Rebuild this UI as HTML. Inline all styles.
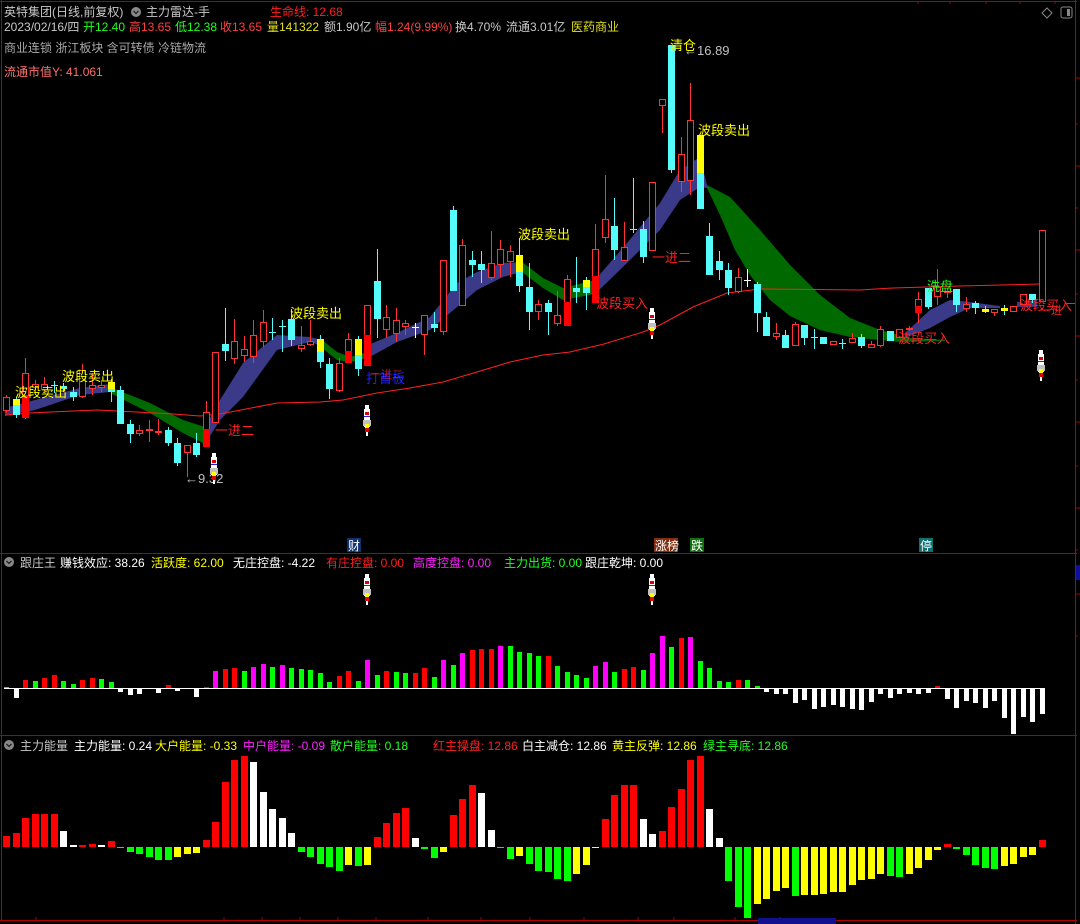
<!DOCTYPE html>
<html><head><meta charset="utf-8">
<style>
html,body{margin:0;padding:0;background:#000;}
body{width:1080px;height:924px;overflow:hidden;}
svg{display:block;}
text{font-family:"Liberation Sans","WenQuanYi Zen Hei","Noto Sans CJK SC",sans-serif;font-size:12px;}
</style></head><body>
<svg id="s" width="1080" height="924" viewBox="0 0 1080 924" xmlns="http://www.w3.org/2000/svg">
<rect width="1080" height="924" fill="#000"/>
<g id="bands"></g>
<g id="ma"></g>
<g id="cand"></g>
<g id="bars"></g>
<!-- frame -->
<g stroke="#b00000" stroke-width="1" fill="none">
<line x1="0" y1="1.5" x2="1077" y2="1.5"/>
<line x1="1.5" y1="0" x2="1.5" y2="921"/>
<line x1="1075.5" y1="0" x2="1075.5" y2="924"/>
<line x1="0" y1="553.5" x2="1077" y2="553.5"/>
<line x1="0" y1="735.5" x2="1077" y2="735.5"/>
<line x1="0" y1="920.5" x2="1077" y2="920.5"/>
<line x1="1065" y1="303.5" x2="1075" y2="303.5" stroke="#ff2020"/>
</g>
<g id="ticks" stroke="#b00000"></g>
<rect x="1076" y="565" width="4" height="15" fill="#1010a0"/>
<rect x="758" y="918" width="78" height="6" fill="#101090"/>
<!-- top right icons -->
<path d="M1047 8 L1052 13 L1047 18 L1042 13 Z" fill="none" stroke="#888" stroke-width="1"/>
<rect x="1061" y="7" width="11" height="11" rx="2" fill="none" stroke="#888"/>
<rect x="1067" y="9" width="3" height="7" fill="#888"/>

<!-- header -->
<g>
<text x="4" y="16" fill="#c8c8c8">英特集团(日线,前复权)</text>
<circle cx="136" cy="12" r="5" fill="#888"/><path d="M133.5 11 L136 13.5 L138.5 11" stroke="#222" fill="none" stroke-width="1.3"/>
<text x="146" y="16" fill="#c8c8c8">主力雷达-手</text>
<text x="270" y="16" fill="#ff2020">生命线: 12.68</text>
<text x="4" y="31" fill="#c8c8c8">2023/02/16/四</text>
<text x="83" y="31" fill="#20ff20">开12.40</text>
<text x="129" y="31" fill="#ff4040">高13.65</text>
<text x="175" y="31" fill="#20ff20">低12.38</text>
<text x="220" y="31" fill="#ff4040">收13.65</text>
<text x="267" y="31" fill="#e0e020">量141322</text>
<text x="324" y="31" fill="#c8c8c8">额1.90亿</text>
<text x="375" y="31" fill="#ff4040">幅1.24(9.99%)</text>
<text x="455" y="31" fill="#c8c8c8">换4.70%</text>
<text x="506" y="31" fill="#c8c8c8">流通3.01亿</text>
<text x="571" y="31" fill="#e0e020">医药商业</text>
<text x="4" y="52" fill="#a8a8a8">商业连锁 浙江板块 含可转债 冷链物流</text>
<text x="4" y="76" fill="#ff7070">流通市值Y: 41.061</text>
</g>

<!-- main labels -->
<g font-size="13">
<text x="15" y="397" fill="#ffff00" style="font-size:13px">波段卖出</text>
<text x="62" y="381" fill="#ffff00" style="font-size:13px">波段卖出</text>
<text x="290" y="318" fill="#ffff00" style="font-size:13px">波段卖出</text>
<text x="518" y="239" fill="#ffff00" style="font-size:13px">波段卖出</text>
<text x="698" y="135" fill="#ffff00" style="font-size:13px">波段卖出</text>
<text x="670" y="50" fill="#ffff00" style="font-size:13px">清仓</text>
<text x="684" y="55" fill="#c0c0c0" style="font-size:13px">←16.89</text>
<text x="185" y="483" fill="#c0c0c0" style="font-size:13px">←9.32</text>
<text x="215" y="435" fill="#ff2020" style="font-size:13px">一进二</text>
<text x="652" y="262" fill="#ff2020" style="font-size:13px">一进二</text>
<text x="366" y="383" fill="#2020ff" style="font-size:13px">打首板</text>
<text x="370" y="378" fill="#ff2020" style="font-size:11px;opacity:.7">一进二</text>
<text x="596" y="308" fill="#ff2020" style="font-size:13px">波段买入</text>
<text x="898" y="343" fill="#ff2020" style="font-size:13px">波段买入</text>
<text x="1020" y="310" fill="#ff2020" style="font-size:13px">波段买入</text>
<text x="1040" y="314" fill="#ff2020" style="font-size:11px">一进</text>
<text x="927" y="291" fill="#20ff20" style="font-size:13px">洗盘</text>
<rect x="347" y="538" width="14" height="14" fill="#103070"/><text x="348" y="550" fill="#fff">财</text>
<rect x="654" y="538" width="24" height="14" fill="#803010"/><text x="655" y="550" fill="#fff">涨榜</text>
<rect x="690" y="538" width="14" height="14" fill="#107010"/><text x="691" y="550" fill="#fff">跌</text>
<rect x="919" y="538" width="14" height="14" fill="#107070"/><text x="920" y="550" fill="#fff">停</text>
</g>

<!-- middle header -->
<g>
<circle cx="9" cy="562" r="5" fill="#888"/><path d="M6.5 561 L9 563.5 L11.5 561" stroke="#222" fill="none" stroke-width="1.3"/>
<text x="20" y="567" fill="#c8c8c8">跟庄王</text>
<text x="60" y="567" fill="#fff">赚钱效应: 38.26</text>
<text x="151" y="567" fill="#ffff00">活跃度: 62.00</text>
<text x="233" y="567" fill="#fff">无庄控盘: -4.22</text>
<text x="326" y="567" fill="#ff2020">有庄控盘: 0.00</text>
<text x="413" y="567" fill="#ff20ff">高度控盘: 0.00</text>
<text x="504" y="567" fill="#20ff20">主力出货: 0.00</text>
<text x="585" y="567" fill="#fff">跟庄乾坤: 0.00</text>
</g>
<g>
<circle cx="9" cy="745" r="5" fill="#888"/><path d="M6.5 744 L9 746.5 L11.5 744" stroke="#222" fill="none" stroke-width="1.3"/>
<text x="20" y="750" fill="#c8c8c8">主力能量</text>
<text x="74" y="750" fill="#fff">主力能量: 0.24</text>
<text x="155" y="750" fill="#ffff00">大户能量: -0.33</text>
<text x="243" y="750" fill="#ff20ff">中户能量: -0.09</text>
<text x="330" y="750" fill="#20ff20">散户能量: 0.18</text>
<text x="433" y="750" fill="#ff2020">红主操盘: 12.86</text>
<text x="522" y="750" fill="#fff">白主减仓: 12.86</text>
<text x="612" y="750" fill="#ffff00">黄主反弹: 12.86</text>
<text x="703" y="750" fill="#20ff20">绿主寻底: 12.86</text>
</g>
<g id="rockets"></g>
</svg>
<script>
var NS="http://www.w3.org/2000/svg";
function el(p,t,a){var e=document.createElementNS(NS,t);for(var k in a)e.setAttribute(k,a[k]);document.getElementById(p).appendChild(e);return e;}
function X(i){return 6+9.5*i;}
// bands
function band(up,lo,col){var pts=up.map(function(p){return p.join(',')}).concat(lo.slice().reverse().map(function(p){return p.join(',')}));el('bands','polygon',{points:pts.join(' '),fill:col});}
var B='#3a3a88',G='#006a00';
band([[5,408],[35,400],[80,388],[110,384]],[[5,416],[35,410],[80,395],[110,392]],B);
band([[112,388],[150,403],[183,420],[205,427]],[[112,394],[150,413],[183,433],[205,444]],G);
band([[205,427],[220,400],[243,363],[277,335],[310,337],[322,340]],[[205,444],[220,420],[243,397],[277,350],[310,342],[322,346]],B);
band([[322,340],[337,352],[350,357],[368,352]],[[322,348],[337,360],[350,362],[368,358]],G);
band([[368,345],[397,333],[430,317],[457,283],[477,272],[503,263],[522,262]],[[368,358],[397,342],[430,330],[457,307],[477,290],[503,277],[522,272]],B);
band([[522,262],[543,278],[563,288],[595,280]],[[522,272],[543,288],[563,300],[595,294]],G);
band([[595,280],[627,243],[660,203],[680,170],[700,157],[707,185]],[[595,294],[627,263],[660,230],[680,200],[700,187],[707,188]],B);
band([[707,185],[730,197],[760,230],[790,265],[820,295],[850,318],[880,330],[910,338],[945,340]],[[707,188],[720,215],[735,250],[750,275],[770,300],[790,316],[820,330],[850,337],[900,342],[945,341]],G);
band([[905,333],[930,310],[950,300],[970,302],[992,305],[1000,306]],[[905,338],[930,328],[950,317],[970,308],[992,308],[1000,308]],B);
band([[1017,302],[1037,300]],[[1017,307],[1037,307]],B);
// MA
var ma=[[5,415],[30,413],[50,412],[97,410],[117,411],[173,414],[200,416],[220,414],[277,403],[320,402],[343,400],[377,393],[410,388],[443,382],[477,372],[510,362],[543,355],[570,352],[604,344],[643,332],[660,325],[693,307],[727,293],[760,289],[860,290],[893,288],[960,286],[1040,284]];
el('ma','polyline',{points:ma.map(function(p){return p.join(',')}).join(' '),fill:'none',stroke:'#ff2020','stroke-width':1});
// candles
var C=[['r',397,411,395,413],['y',399,415,397,418,405],['R',373,418,358,419,395],['r',384,388,380,392],['r',384,390,377,392],['c',385,386,381,393],['c',386,389,383,392],['c',392,397,387,401],['r',370,397,364,398],['r',385,389,373,395],['r',385,388,380,392],['y',382,392,379,402,389],['c',390,424,386,424],['c',424,434,420,443],['r',430,434,425,436],['r',429,431,420,442],['r',431,433,419,435],['c',430,443,427,446],['c',443,463,438,466],['r',445,453,445,477],['c',443,455,433,457],['R',412,447,401,447,429],['r',352,423,352,423],['c',344,351,308,361],['r',341,359,319,364],['r',349,356,336,362],['r',335,357,320,363],['r',322,342,310,347],['c',332,333,318,340],['c',326,327,320,352],['c',319,340,309,346],['r',345,349,326,352],['r',341,345,320,346],['y',339,362,335,368,352],['c',364,389,358,399],['r',363,391,358,392],['R',339,363,333,363,351],['y',339,369,336,376,355],['R',305,366,305,366,335],['c',281,319,249,338],['r',317,330,305,338],['r',320,334,308,342],['r',323,327,320,335],['w',327,328,323,338],['r',315,335,315,355],['c',324,328,312,332],['r',260,332,260,335],['c',210,291,206,291],['r',245,306,239,306],['c',260,265,251,277],['c',264,270,251,283],['r',263,278,231,280],['r',249,265,240,277],['r',251,262,245,277],['y',255,286,238,292,272],['c',287,312,263,330],['r',304,312,300,320],['c',303,312,300,335],['r',315,324,291,326],['R',279,326,275,326,302],['c',288,292,257,303],['y',280,293,277,310,287],['R',249,303,224,303,276],['r',219,238,175,243],['c',226,250,198,260],['r',247,261,222,261],['c',229,230,178,233],['c',229,257,221,263],['r',182,251,182,251],['r',99,106,99,133],['c',45,170,45,173],['r',154,182,137,192],['r',120,181,83,195],['y',135,209,135,209,173],['c',236,275,223,275],['c',261,270,251,280],['c',270,288,263,295],['r',277,292,268,293],['w',280,281,269,287],['c',284,313,282,332],['c',317,336,312,336],['r',333,337,323,340],['c',335,348,330,348],['r',324,346,322,346],['c',325,338,325,345],['c',337,338,329,349],['c',337,344,337,344],['r',341,345,341,345],['c',343,344,339,349],['r',338,343,333,343],['c',337,346,334,348],['r',344,348,341,348],['r',329,346,326,347],['c',331,341,331,341],['r',329,338,329,338],['r',328,329,326,331],['R',299,313,292,323,306],['c',288,307,288,309],['r',287,297,269,305],['r',291,293,291,298],['c',289,305,289,312],['r',304,309,297,312],['c',303,308,301,314],['Y',309,312,306,313],['r',309,313,309,316],['Y',308,311,305,315],['r',306,312,306,312],['r',294,305,294,305],['c',294,300,294,303],['r',230,302,230,302]];
var CY='#54fcfc',RD='#ff3232',YL='#ffff00';
C.forEach(function(c,i){var x=Math.round(X(i)),t=c[0],a=c[1],b=c[2],wt=c[3],wb=c[4];var h=Math.max(b-a,1);
 var col=(t=='c'||t=='y'||t=='Y')?CY:(t=='w'?'#fff':RD);
 el('cand','rect',{x:x,y:wt,width:1,height:Math.max(wb-wt,1),fill:col});
 if(t=='r'){el('cand','rect',{x:x-2.5,y:a+0.5,width:6,height:Math.max(h-1,1),fill:'#000',stroke:RD,'stroke-width':1});}
 else if(t=='R'){el('cand','rect',{x:x-2.5,y:a+0.5,width:6,height:h-1,fill:'#000',stroke:RD,'stroke-width':1});el('cand','rect',{x:x-3,y:c[5],width:7,height:b-c[5],fill:'#ff0000'});}
 else if(t=='c'){el('cand','rect',{x:x-3,y:a,width:7,height:h,fill:CY});}
 else if(t=='y'){el('cand','rect',{x:x-3,y:a,width:7,height:h,fill:CY});el('cand','rect',{x:x-3,y:a,width:7,height:c[5]-a,fill:YL});}
 else if(t=='Y'){el('cand','rect',{x:x-3,y:a,width:7,height:h,fill:YL});}
 else if(t=='w'){el('cand','rect',{x:x-3,y:a,width:7,height:1,fill:'#fff'});}
});
// middle bars
var M='g1 w-9 r8 g7 r10 r13 g7 g4 r8 r10 g9 g6 w-3 w-6 w-5 g0 w-4 r3 w-2 g0 w-8 r1 m17 r19 r20 g17 m21 m24 g21 m23 g20 g19 g18 g15 g6 r12 r17 g7 m28 g13 r17 g16 g15 r15 r20 g11 m28 g23 m35 r38 r39 r39 m42 g42 g36 g35 g32 r32 g22 g16 g13 g10 m22 m26 g16 r19 r21 g18 m35 m52 g41 r50 m51 g27 g20 g7 g6 r8 g8 g2 w-3 w-5 w-5 w-14 w-11 w-20 w-18 w-16 w-18 w-20 w-21 w-13 w-5 w-9 w-5 w-4 w-5 w-4 r2 w-10 w-19 w-12 w-14 w-19 w-12 w-29 w-45 w-28 w-33 w-25'.split(' ');
var CM={g:'#00ff00',r:'#ff0000',m:'#ff00ff',w:'#ffffff',y:'#ffff00'};
el('bars','rect',{x:4,y:688,width:1041,height:1,fill:'#fff'});
M.forEach(function(s,i){var c=s[0],v=parseFloat(s.slice(1));if(v==0)return;var x=Math.round(X(i))-2;
 if(v>0)el('bars','rect',{x:x,y:688-v,width:5,height:v,fill:CM[c]});else el('bars','rect',{x:x,y:689,width:5,height:-v,fill:CM[c]});});
var L='r11 r14 r29 r33 r33 r33 w16 w2 r2 r3 w2 r6 g-1 g-5 g-7 g-10 g-13 g-13 y-10 y-7 y-6 r7 r25 r65 r87 r91 w85 w55 w38 w29 w14 g-5 g-10 g-17 g-20 g-24 y-18 g-19 y-18 r10 r24 r34 r39 w9 g-2 g-11 y-5 r32 r48 r62 w54 w17 g-1 g-12 y-9 g-17 g-24 g-25 g-32 g-34 y-27 y-18 y-1 r28 r52 r62 r62 w28 w13 r16 r40 r58 r87 r91 w38 w9 g-34 g-60 g-71 y-57 y-52 y-44 y-41 g-49 y-48 y-48 y-47 y-45 y-45 y-38 y-33 y-32 y-27 g-29 g-30 y-27 y-21 y-13 y-3 r3 g-2 g-8 g-18 g-21 g-22 y-19 y-17 y-10 y-8 r7'.split(' ');
L.forEach(function(s,i){var c=s[0],v=parseFloat(s.slice(1));if(v==0)return;var x=Math.round(X(i))-3;
 if(v>0)el('bars','rect',{x:x,y:847-v,width:7,height:v,fill:CM[c]});else el('bars','rect',{x:x,y:847,width:7,height:-v,fill:CM[c]});});
// ticks
[35,58,79,100,121,143,164,186,207,229,250,271,293,314].forEach(function(y,i){el('ticks','line',{x1:1075,y1:y*2+8,x2:i%2?1078:1080,y2:y*2+8});});
[38,70,106,140,175,217,253,290,333,364,406,440,481,517].forEach(function(x){el('ticks','line',{x1:x+880,y1:1,x2:x+880,y2:4});});
[36,224,262,300,338,376,428,481,530,584,638,674,735,780].forEach(function(x){el('ticks','line',{x1:x,y1:917,x2:x,y2:921});});
// rockets
function rocket(x,y){var g='rockets';
 el(g,'rect',{x:x-2,y:y,width:4,height:4,fill:'#fff'});
 el(g,'rect',{x:x-3,y:y+4,width:6,height:18,fill:'#fff'});
 el(g,'rect',{x:x-2,y:y+7,width:4,height:3,fill:'#e00000'});
 el(g,'rect',{x:x-3,y:y+11,width:6,height:1,fill:'#2020e0'});
 el(g,'rect',{x:x-4,y:y+15,width:8,height:6,fill:'#c0c0c0'});
 el(g,'rect',{x:x-2,y:y+19,width:4,height:4,fill:'#ffff00'});
 el(g,'rect',{x:x-2,y:y+23,width:4,height:4,fill:'#e00000'});
 el(g,'rect',{x:x-1,y:y+27,width:2,height:4,fill:'#fff'});}
rocket(367,405);rocket(652,308);rocket(214,453);rocket(1041,350);rocket(367,574);rocket(652,574);
</script>
</body></html>
